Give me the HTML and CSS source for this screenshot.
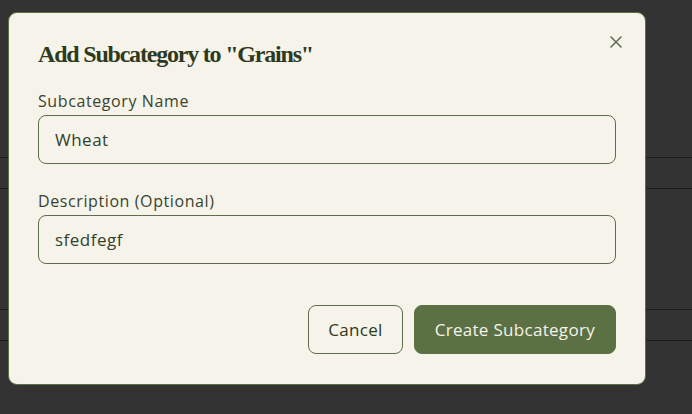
FILE: index.html
```html
<!DOCTYPE html>
<html lang="en">
<head>
<meta charset="utf-8">
<title>Add Subcategory</title>
<link rel="stylesheet" href="styles.css">
</head>
<body>
<div class="backdrop">
  <div class="row row-head"></div>
  <div class="row row-short"></div>
  <div class="row row-tall"></div>
  <div class="row row-short"></div>
</div>
<div class="modal" role="dialog" aria-labelledby="modal-title">
  <button class="close" type="button" aria-label="Close">
    <svg width="12" height="12" viewBox="0 0 12 12" aria-hidden="true">
      <path d="M1 1 L11 11 M11 1 L1 11" stroke="currentColor" stroke-width="1.5" stroke-linecap="round" fill="none"/>
    </svg>
  </button>
  <h2 class="title" id="modal-title">Add Subcategory to "Grains"</h2>
  <form class="form">
    <div class="field">
      <label class="label" for="name">Subcategory Name</label>
      <input class="input" id="name" type="text" value="Wheat">
    </div>
    <div class="field">
      <label class="label" for="desc">Description (Optional)</label>
      <input class="input" id="desc" type="text" value="sfedfegf">
    </div>
    <div class="actions">
      <button class="btn btn-outline" type="button">Cancel</button>
      <button class="btn btn-primary" type="button">Create Subcategory</button>
    </div>
  </form>
</div>
</body>
</html>
```
FILE: styles.css
```css
* { box-sizing: border-box; }
html, body {
  margin: 0;
  height: 100%;
}
body {
  background: #333333;
  font-family: "Open Sans", Lato, sans-serif;
  overflow: hidden;
}
.backdrop {
  display: flex;
  flex-direction: column;
}
.row { border-bottom: 1px solid #1c1c1c; }
.row-head { height: 158px; }
.row-short { height: 31px; }
.row-tall { height: 121px; }

.modal {
  position: absolute;
  left: 8px;
  top: 12px;
  width: 638px;
  background: #f5f3ea;
  border: 1px solid #5d6e45;
  border-radius: 9px;
  padding: 25px 29px 30px;
}
.close {
  position: absolute;
  top: 23px;
  right: 23px;
  width: 12px;
  height: 12px;
  padding: 0;
  border: 0;
  background: none;
  color: #5d6a4f;
  display: flex;
}
.title {
  margin: 0 0 19px;
  font-family: "Liberation Serif", serif;
  font-weight: bold;
  font-size: 24px;
  line-height: 32px;
  color: #2e3a20;
  letter-spacing: -1.2px;
}
.form {
  display: flex;
  flex-direction: column;
  gap: 25px;
}
.field {
  display: flex;
  flex-direction: column;
  gap: 2px;
}
.label {
  font-size: 16px;
  line-height: 24px;
  color: #39432e;
  letter-spacing: 0.6px;
}
.input {
  height: 49px;
  border: 1px solid #5e6e48;
  border-radius: 8px;
  background: #f5f3ea;
  padding: 0 16px;
  font-family: "Open Sans", Lato, sans-serif;
  font-size: 17px;
  letter-spacing: 0.5px;
  color: #33402a;
  outline: none;
}
.actions {
  display: flex;
  justify-content: flex-end;
  gap: 11px;
  margin-top: 16px;
}
.btn {
  height: 49px;
  border-radius: 8px;
  padding: 0 20px;
  font-family: "Open Sans", Lato, sans-serif;
  font-size: 17px;
  letter-spacing: 0.3px;
}
.btn-outline {
  background: #f5f3ea;
  border: 1px solid #5e6e48;
  color: #2e3a20;
  padding: 0 19px;
}
.btn-primary {
  background: #5b7043;
  border: 1px solid #5b7043;
  color: #f5f3ea;
}
```
